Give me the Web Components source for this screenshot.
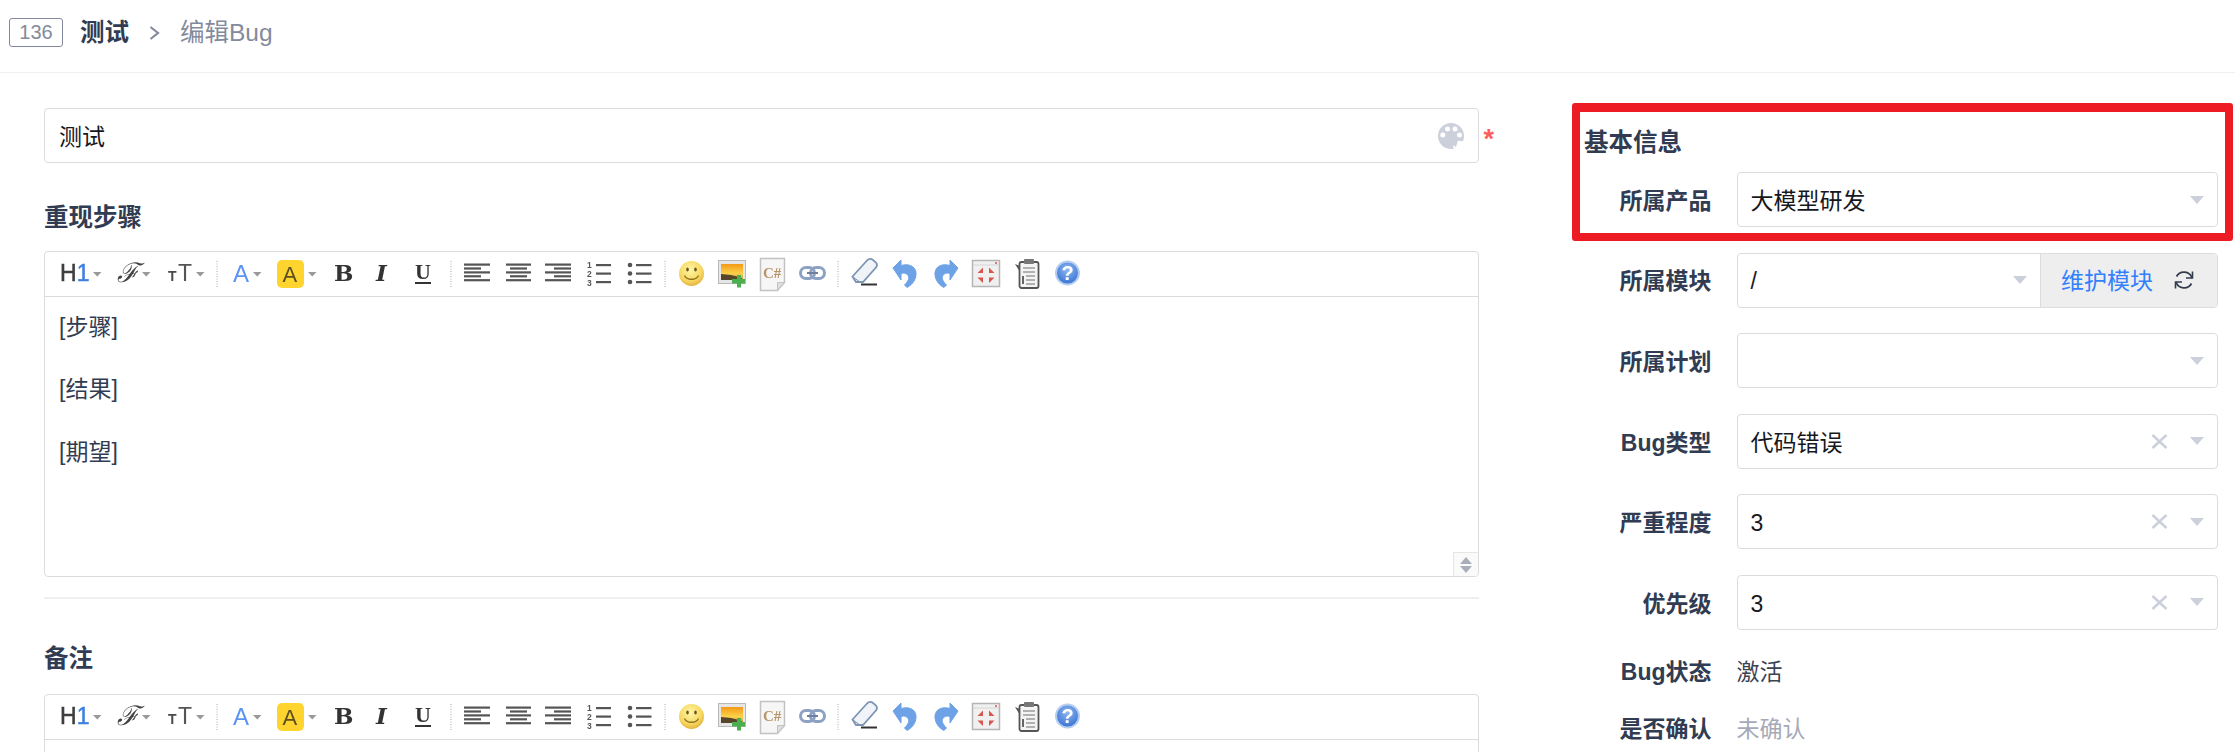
<!DOCTYPE html>
<html lang="zh"><head><meta charset="utf-8"><title>编辑Bug</title>
<style>
html,body{margin:0;height:752px;overflow:hidden;background:#fff}
body{font:23px/1.5 "Liberation Sans","Noto Sans CJK SC",sans-serif;color:#313c52}
</style></head><body>
<bug-page>
  <page-header slot="header" badge="136" name="测试" action="编辑Bug"></page-header>
  <div slot="left" style="display:contents">
    <title-input value="测试"></title-input>
    <section-title style="margin-top:37px;margin-bottom:17px">重现步骤</section-title>
    <rich-editor resizable style="height:326px">
      <p>[步骤]</p><p>[结果]</p><p>[期望]</p>
    </rich-editor>
    <section-divider></section-divider>
    <section-title style="margin-top:42px;margin-bottom:19px">备注</section-title>
    <rich-editor style="height:300px"></rich-editor>
  </div>
  <side-panel slot="right">
    <section-title style="margin-top:17px;margin-bottom:13px">基本信息</section-title>
    <div style="display:flex;flex-direction:column;gap:25.6px">
      <form-row label="所属产品"><select-box value="大模型研发"></select-box></form-row>
      <form-row label="所属模块"><select-box value="/" action="维护模块"></select-box></form-row>
      <form-row label="所属计划"><select-box></select-box></form-row>
      <form-row label="Bug类型"><select-box value="代码错误" clearable></select-box></form-row>
      <form-row label="严重程度"><select-box value="3" clearable></select-box></form-row>
      <form-row label="优先级"><select-box value="3" clearable></select-box></form-row>
      <form-row label="Bug状态" plain><span style="color:#3c4353">激活</span></form-row>
      <form-row label="是否确认" plain><span style="color:#a6aab8">未确认</span></form-row>
    </div>
  </side-panel>
</bug-page>
<script>
const define=(name,css,html)=>customElements.define(name,class extends HTMLElement{
  constructor(){super();this.attachShadow({mode:'open'})}
  connectedCallback(){this.shadowRoot.innerHTML=`<style>${css}</style>`+(typeof html==='function'?html(this):html);}
});

define('bug-page',`
  :host{display:block;height:752px;overflow:hidden}
  .main{display:grid;grid-template-columns:1435px 1fr;column-gap:105px;padding:35px 17px 0 44px}
  .col{display:flex;flex-direction:column;position:relative;min-width:0}
`,`<slot name="header"></slot><div class="main"><div class="col"><slot name="left"></slot></div><div class="col"><slot name="right"></slot></div></div>`);

define('page-header',`
  :host{display:flex;align-items:center;padding:0 0 7px 9px;box-sizing:border-box;height:73px;border-bottom:1.5px solid #eeeff1}
  .badge{width:54px;height:29px;box-sizing:border-box;border:1.5px solid #838a9d;border-radius:3px;color:#838a9d;font-size:20px;line-height:26px;text-align:center;margin-right:17px}
  .name{font-size:24.5px;font-weight:700;color:#313c52;line-height:36px}
  svg{margin:0 20px 0 20px;display:block}
  .act{font-size:24.5px;color:#838a9d;line-height:36px}
`,h=>`<span class="badge">${h.getAttribute('badge')}</span><span class="name">${h.getAttribute('name')}</span>
<svg width="11" height="14" viewBox="0 0 11 14"><path d="M1.5 1 9 7 1.5 13" fill="none" stroke="#838a9d" stroke-width="2.200"/></svg>
<span class="act">${h.getAttribute('action')}</span>`);

define('title-input',`
  :host{display:flex;align-items:center;height:55px;box-sizing:border-box;border:1.5px solid #dcdcdc;border-radius:4px;padding:0 14px 0 14px;position:relative;color:#16181d}
  .v{flex:1;padding-top:4px}
  .star{position:absolute;left:100%;margin-left:5.500px;top:13px;color:#ff5d5d;font-size:27px;line-height:34px;font-weight:700}
  svg{display:block}
`,h=>`<span class="v">${h.getAttribute('value')}</span>
<svg width="26" height="26" viewBox="0 0 26 26"><circle cx="13" cy="13" r="13" fill="#cbd0db"/><path d="M16 26c-1.500-3-1.500-5 .5-7s5-1.500 9.500-.5V26z" fill="#fff"/><path d="M13 21c1-3 4-4.500 7-4l-2 7z" fill="#cbd0db"/><g fill="#fff"><circle cx="9.500" cy="6" r="2.500"/><circle cx="17" cy="6" r="2.500"/><circle cx="4.800" cy="12" r="2.500"/><circle cx="21.500" cy="12" r="2.500"/></g></svg>
<span class="star">*</span>`);

define('section-title',`:host{display:block;font-size:24.5px;font-weight:700;line-height:32px;padding-top:2px;color:#313c52}`,`<slot></slot>`);
define('section-divider',`:host{display:block;height:1.5px;background:#eeeff1;margin-top:20px}`,``);

const caret=x=>`<path d="M${x} 20h8.500l-4.250 4.500z" fill="#999"/>`;
const serif='font-family="Liberation Serif,serif"';
const sans='font-family="Liberation Sans,sans-serif"';
const lines=(xs)=>xs.map((p,i)=>`<rect x="${p[0]}" y="${11.500+i*3.900}" width="${p[1]}" height="2.200" fill="#555"/>`).join('');
const ICONS={
 h1:[52,4,`<text x="0" y="29" font-size="23" ${sans} fill="#3f3f3f" stroke="#3f3f3f" stroke-width=".5">H<tspan fill="#3f7fe0" stroke="#3f7fe0">1</tspan></text>${caret(33)}`],
 f:[52,9,`<text x="0" y="30" font-size="27" font-family="DejaVu Serif,serif" font-style="italic" fill="#444">ℱ</text>${caret(25)}`],
 t:[53,8,`<text x="0" y="29" font-size="14" font-weight="700" ${sans} fill="#4a4a4a">T</text><text x="10" y="29" font-size="23" ${sans} fill="#555">T</text>${caret(28)}`],
 a:[49,12,`<text x="0" y="30" font-size="24" ${sans} fill="#5b93f5">A</text>${caret(20)}`],
 hl:[55,7,`<rect x="0" y="8" width="27" height="28" rx="5" fill="#ffd42f"/><text x="5.500" y="29.500" font-size="22" ${sans} fill="#5c5020">A</text>${caret(31)}`],
 b:[41,9,`<text x="0" y="29" font-size="23" font-weight="700" font-family="DejaVu Serif,serif" fill="#333">B</text>`],
 i:[40,10,`<text x="0" y="29" font-size="23" font-weight="700" font-style="italic" font-family="DejaVu Serif,serif" fill="#333">I</text>`],
 u:[41,9,`<text x="0" y="27" font-size="22" font-weight="700" ${serif} fill="#333">U</text><rect x="0" y="30" width="16" height="2" fill="#333"/>`],
 sep:[8,4,`<path d="M0 9V36" stroke="#aaa" stroke-dasharray="1 1.500"/>`],
 al:[43,9,lines([[0,26],[0,17],[0,26],[0,17],[0,26]])],
 ac:[40,8,lines([[0,25],[4,17],[0,25],[4,17],[0,25]])],
 ar:[40,7,lines([[0,26],[9,17],[0,26],[9,17],[0,26]])],
 ol:[41,8,`<g font-size="8.500" font-weight="700" ${sans} fill="#555"><text x="1" y="16">1</text><text x="1" y="25">2</text><text x="1" y="34">3</text></g><g fill="#555"><rect x="10" y="12" width="15" height="2.200"/><rect x="10" y="20.500" width="15" height="2.200"/><rect x="10" y="29" width="15" height="2.200"/></g>`],
 ul:[42,8,`<g fill="#555"><circle cx="3" cy="13" r="2.300"/><circle cx="3" cy="21.500" r="2.300"/><circle cx="3" cy="30" r="2.300"/><rect x="9" y="12" width="15.500" height="2.200"/><rect x="9" y="20.500" width="15.500" height="2.200"/><rect x="9" y="29" width="15.500" height="2.200"/></g>`],
 smile:[42,10,`<defs><radialGradient id="sm" cx=".45" cy=".35" r=".7"><stop offset="0" stop-color="#fff6a8"/><stop offset=".65" stop-color="#f6d75e"/><stop offset="1" stop-color="#e0a93a"/></radialGradient></defs><circle cx="12.500" cy="21.500" r="12.500" fill="url(#sm)"/><ellipse cx="8.500" cy="17.500" rx="1.300" ry="2.100" fill="#6d5418"/><ellipse cx="16.500" cy="17.500" rx="1.300" ry="2.100" fill="#6d5418"/><path d="M5.500 23.500c2 5 12 5 14 0" fill="none" stroke="#8d6e20" stroke-width="1.300"/>`],
 image:[42,7,`<defs><linearGradient id="im" x1="0" x2="0" y1="0" y2="1"><stop offset="0" stop-color="#f39a16"/><stop offset=".6" stop-color="#fbd24a"/><stop offset="1" stop-color="#c99a3a"/></linearGradient></defs><rect x=".5" y="8.500" width="27" height="23" fill="#e6e6e6" stroke="#b9b9b9"/><rect x="3" y="12" width="22" height="16" fill="url(#im)"/><path d="M3 28V22l10 1 10 2.500 2 2.500z" fill="#57462a"/><path d="M18 30h5v-4h4v4h4v4.500h-4v4h-4v-4h-5z" transform="translate(-4 -3)" fill="#4bae4f"/>`],
 code:[39,7,`<path d="M.5 6.500h24v24l-7 8H.5z" fill="#f6f6f6" stroke="#c2c2c2" stroke-width="1.500"/><path d="M17.500 38.500v-8h7z" fill="#dedede" stroke="#c2c2c2"/><text x="3" y="26" font-size="15" font-weight="700" ${serif} fill="#b8946a">C#</text>`],
 link:[42,7,`<g fill="none" stroke-width="3"><rect x="1.500" y="15.500" width="14" height="11" rx="5.500" stroke="#8da2c2"/><rect x="11.500" y="15.500" width="14" height="11" rx="5.500" stroke="#8da2c2"/></g><path d="M8 21h11" stroke="#6d7f9c" stroke-width="2"/>`],
 eraser:[43,10,`<path d="M.5 24.500 15 8.500c2-2 4-2 6-.5l3 2.500c1.500 2 1 4-.5 5.500L11 30H4z" fill="#f0f4f9" stroke="#7d94b3" stroke-width="1.800"/><path d="M1 25l7 5" stroke="#7d94b3"/><path d="M9 32.500h16" stroke="#333" stroke-width="2"/>`],
 undo:[41,8,`<path d="M0 16 8 8v5.500c7-2 14 0 15 7 .500 6-3 12-9 15l-2.500-2.500c4-4 5-7 3.500-9.500-1.500-2.500-4-3-7-2v6.500z" fill="#6ea2e6" stroke="#6ea2e6"/>`],
 redo:[39,9,`<path d="M23 16 15 8v5.500c-7-2-14 0-15 7-.500 6 3 12 9 15l2.500-2.500c-4-4-5-7-3.500-9.500 1.500-2.500 4-3 7-2v6.500z" fill="#6ea2e6" stroke="#6ea2e6"/>`],
 full:[43,7,`<rect x=".5" y="8.500" width="27" height="26" fill="#f0f0f0" stroke="#b5b5b5" stroke-width="1.500"/><path d="M1 13h26" stroke="#d5d5d5"/><circle cx="24" cy="11" r="1" fill="#d55"/><g fill="#d8564c"><path d="M11 15.500v5.500H5.500zM17 15.500v5.500h5.500zM11 31v-5.500H5.500zM17 31v-5.500h5.500z"/></g>`],
 clip:[40,7,`<path d="M5 14 0 12l5 8z" fill="#555"/><rect x="4.500" y="10" width="19" height="26" rx="2" fill="#f4f4f4" stroke="#555" stroke-width="1.800"/><rect x="9" y="7" width="10" height="5" rx="1" fill="#777"/><g stroke="#9a9a9a" stroke-width="1.300"><path d="M8 16h12M8 20h12M11 24h9M11 28h9M11 32h9"/></g><path d="M8 24v8" stroke="#666" stroke-width="2"/>`],
 help:[42,7,`<defs><radialGradient id="hp" cx=".5" cy=".35" r=".7"><stop offset="0" stop-color="#8fb8f0"/><stop offset="1" stop-color="#2f6bd0"/></radialGradient></defs><circle cx="12.500" cy="21" r="11.500" fill="url(#hp)" stroke="#b5cdf0" stroke-width="2"/><text x="12.500" y="28" text-anchor="middle" font-size="20" font-weight="700" ${sans} fill="#fff">?</text>`]
};
const ORDER='h1 f t sep a hl b i u sep al ac ar ol ul sep smile image code link sep eraser undo redo full clip help'.split(' ');

define('ke-toolbar',`
  :host{display:flex;height:44px;padding-left:11px;border-bottom:1.5px solid #dcdcdc;flex:none}
  svg{display:block;flex:none;filter:blur(.5px);overflow:visible}
`,()=>ORDER.map(k=>{const[w,o,c]=ICONS[k];return `<svg width="${w}" height="44" viewBox="0 0 ${w} 44"><g transform="translate(${o} 0)">${c}</g></svg>`}).join(''));

define('rich-editor',`
  :host{display:flex;flex-direction:column;box-sizing:border-box;border:1.5px solid #dcdcdc;border-radius:4px;position:relative;flex:none;color:#313c52;overflow:hidden}
  .body{padding:14px 14px;line-height:33.6px}
  ::slotted(p){margin:0 0 28.8px}
  .rz{position:absolute;right:0;bottom:0;width:25px;height:24px;box-sizing:border-box;border:1px solid #e6e6e6;border-width:1px 0 0 1px;background:#fafafa;display:flex;align-items:center;justify-content:center}
`,h=>`<ke-toolbar></ke-toolbar><div class="body"><slot></slot></div>${h.hasAttribute('resizable')?`<span class="rz"><svg width="14" height="18" viewBox="0 0 14 18"><path d="M7 1l6 7H1zM7 17l6-7H1z" fill="#a9aebb"/></svg></span>`:''}`);

define('side-panel',`
  :host{display:block;position:relative}
  .mark{position:absolute;left:-12px;top:-5px;width:661px;height:138px;box-sizing:border-box;border:solid #ed1c24;border-width:9px 8px 8px;border-radius:3px;pointer-events:none}
`,`<slot></slot><span class="mark"></span>`);

define('form-row',`
  :host{display:flex;align-items:center;height:55px;gap:25px;min-width:0}
  :host([plain]){height:31.2px}
  .l{width:127.500px;flex:none;text-align:right;font-weight:700;color:#313c52;white-space:nowrap;padding-top:3px}
  .c{flex:1;min-width:0}
  :host([plain]) .c{padding-top:3px}
`,h=>`<span class="l">${h.getAttribute('label')}</span><div class="c"><slot></slot></div>`);

define('select-box',`
  :host{display:flex;height:55px;box-sizing:border-box;border:1.5px solid #dcdcdc;border-radius:4px;color:#16181d;overflow:hidden}
  .f{flex:1;display:flex;align-items:center;padding:0 13px 0 13px;min-width:0}
  .v{flex:1;white-space:nowrap;padding-top:3px}
  .x{margin-right:22px;display:block}
  .ar{display:block}
  .btn{width:177px;flex:none;background:#eeeeef;border-left:1.5px solid #dcdcdc;display:flex;align-items:center;box-sizing:border-box;padding-left:20px;color:#3280fc}
  .btn span{padding-top:3px}
  .btn svg{margin-left:20px;display:block}
`,h=>{
  const a=h.getAttribute('action');
  return `<div class="f"><span class="v">${h.getAttribute('value')||''}</span>
  ${h.hasAttribute('clearable')?`<svg class="x" width="17" height="15" viewBox="0 0 17 15"><path d="M1.500 1 15.500 14M15.500 1 1.500 14" stroke="#ccd0da" stroke-width="2.600" fill="none"/></svg>`:''}
  <svg class="ar" width="14" height="8" viewBox="0 0 14 8"><path d="M0 0h14L7 8z" fill="#cbd0db"/></svg></div>
  ${a?`<div class="btn"><span>${a}</span><svg width="22" height="22" viewBox="0 0 22 22" fill="none" stroke="#333c4d" stroke-width="1.800"><path d="M19 9A8.500 8.500 0 0 0 3.500 7.500"/><path d="M3 13a8.500 8.500 0 0 0 15.500 1.500"/><path d="M19.500 2.500v6.500h-6.500M2.500 19.500v-6.500h6.500" stroke-width="1.600"/></svg></div>`:''}`;
});
</script>
</body></html>
